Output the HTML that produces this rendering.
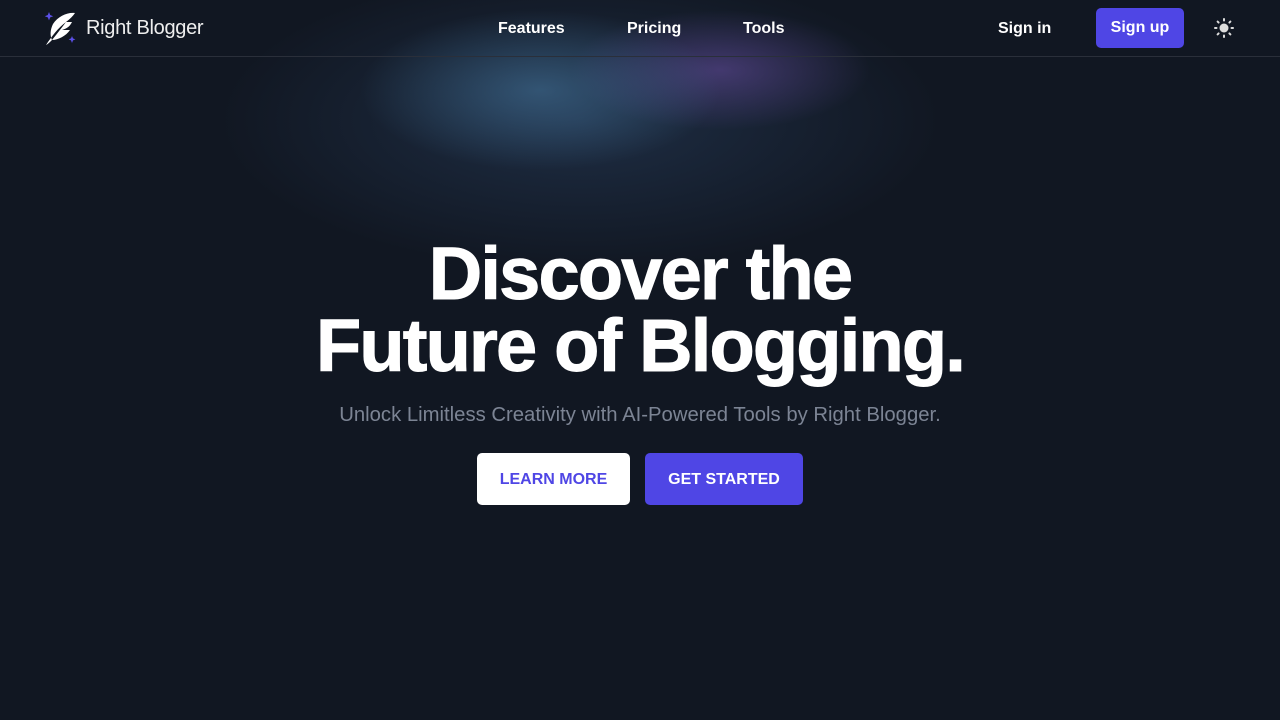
<!DOCTYPE html>
<html style="width:1280px;height:720px;overflow:hidden"><head><style>
*{margin:0;padding:0;box-sizing:border-box}
body{width:1280px;height:720px;overflow:hidden;background:#111722;font-family:"Liberation Sans",sans-serif;position:relative}
.glow{position:absolute;left:0;top:0;width:1280px;height:720px;
background:
radial-gradient(ellipse 180px 80px at 540px 90px,rgba(70,120,160,.55),transparent),
radial-gradient(ellipse 150px 60px at 720px 70px,rgba(110,80,170,.5),transparent),
radial-gradient(ellipse 360px 150px at 580px 120px,rgba(50,80,120,.4),transparent);
clip-path:inset(0 0 0 0)}
header{position:absolute;top:0;left:0;width:1280px;height:57px;border-bottom:1px solid #2a2f3a;}
.logo{position:absolute;left:44px;top:10px}
.brand{position:absolute;left:86px;top:17px;color:#eee;font-size:20px;letter-spacing:-.3px}
.nav a{position:absolute;top:20px;color:#fff;font-weight:bold;font-size:16px;text-decoration:none}
.su{position:absolute;left:1096px;top:8px;width:88px;height:40px;border-radius:5px;background:#4f46e5;color:#fff;font-weight:bold;font-size:16px;text-align:center;line-height:40px}
h1{position:absolute;top:238px;left:0;width:1280px;text-align:center;color:#fff;font-size:74px;line-height:72px;font-weight:bold;letter-spacing:-1.8px;-webkit-text-stroke:1px #fff}
p{position:absolute;top:404px;left:0;width:1280px;text-align:center;color:#7c8494;font-size:20.3px}
.b{position:absolute;top:453px;height:52px;border-radius:5px;font-weight:bold;font-size:16px;text-align:center;line-height:54px}
</style></head><body>
<div class="glow"></div>
<header>
<svg class="logo" width="36" height="36" viewBox="0 0 36 36">
<path d="M5 2l1.2 3 3 1.2-3 1.2L5 10.4 3.8 7.4 .8 6.2l3-1.2z" fill="#5b50e8"/>
<path d="M28 26l1 2.4 2.4 1-2.4 1L28 33l-1-2.6-2.4-1 2.4-1z" fill="#5b50e8"/>
<path d="M2 35C8 26 14 18 22 12 16 20 12 25 8 30 14 30 22 26 26 20 20 20 20 20 18 20 24 18 26 16 28 12 24 12 22 12 22 12 26 9 29 6 31 3 24 2 14 6 9 14 6 20 6 26 8 30 6 32 4 34 2 35z" fill="#fff"/>
</svg>
<div class="brand">Right Blogger</div>
<div class="nav"><a style="left:498px">Features</a><a style="left:627px">Pricing</a><a style="left:743px">Tools</a><a style="left:998px">Sign in</a></div>
<div class="su">Sign up</div>
<svg style="position:absolute;left:1214px;top:18px" width="20" height="20" viewBox="0 0 20 20" stroke="#ddd" stroke-width="2" stroke-linecap="round"><circle cx="10" cy="10" r="4.5" fill="#ddd" stroke="none"/><path d="M10 1v1.5M10 17.5V19M1 10h1.5M17.5 10H19M3.6 3.6l1 1M15.4 15.4l1 1M3.6 16.4l1-1M15.4 4.6l1-1"/></svg>
</header>
<h1>Discover the<br>Future of Blogging.</h1>
<p>Unlock Limitless Creativity with AI-Powered Tools by Right Blogger.</p>
<div class="b" style="left:477px;width:153px;background:#fff;color:#4f46e5">LEARN MORE</div>
<div class="b" style="left:645px;width:158px;background:#4f46e5;color:#fff">GET STARTED</div>
</body></html>
